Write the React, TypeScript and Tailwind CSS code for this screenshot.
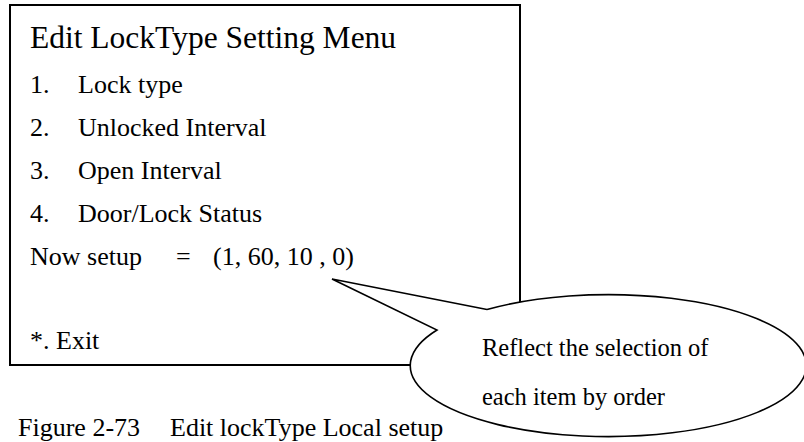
import React from "react";

export default function App() {
  const items = ["Lock type", "Unlocked Interval", "Open Interval", "Door/Lock Status"];
  return (
    <div
      className="relative w-[804px] h-[442px] bg-white text-black overflow-hidden"
      style={{ fontFamily: '"Liberation Serif", "Times New Roman", serif' }}
    >
      <div className="ml-[9px] mt-[4px] w-[512px] h-[362px] border-2 border-black flex flex-col pl-[19px] pt-[12px]">
        <div className="text-[31.5px] leading-[40px] whitespace-nowrap">Edit LockType Setting Menu</div>
        <div className="flex flex-col mt-[4.5px] text-[26px] leading-[43px]">
          {items.map((t, i) => (
            <div key={t} className="flex h-[43px] whitespace-nowrap">
              <span className="w-[48px]">{i + 1}.</span>
              <span>{t}</span>
            </div>
          ))}
          <div className="flex h-[43px] whitespace-nowrap">
            <span className="w-[146px]">Now setup</span>
            <span className="w-[37px]">=</span>
            <span>(1, 60, 10 , 0)</span>
          </div>
          <div className="h-[43px] mt-[41px] whitespace-nowrap">*. Exit</div>
        </div>
      </div>
      <div className="flex ml-[18px] mt-[47px] text-[26px] leading-[30px] whitespace-nowrap">
        <span className="w-[152px]">Figure 2-73</span>
        <span>Edit lockType Local setup</span>
      </div>

      <svg className="absolute left-0 top-0" width="804" height="442" viewBox="0 0 804 442">
        <path
          d="M 487 309.5 L 332 279 L 437 330 A 198 71 0 1 0 487 309.5"
          fill="white"
          stroke="black"
          strokeWidth="1.6"
          strokeLinejoin="miter"
        />
      </svg>
      <div className="absolute left-[482px] top-[333px] text-[24.5px] leading-[30px] whitespace-nowrap">
        Reflect the selection of
      </div>
      <div className="absolute left-[482px] top-[382px] text-[24.5px] leading-[30px] whitespace-nowrap">
        each item by order
      </div>
    </div>
  );
}
